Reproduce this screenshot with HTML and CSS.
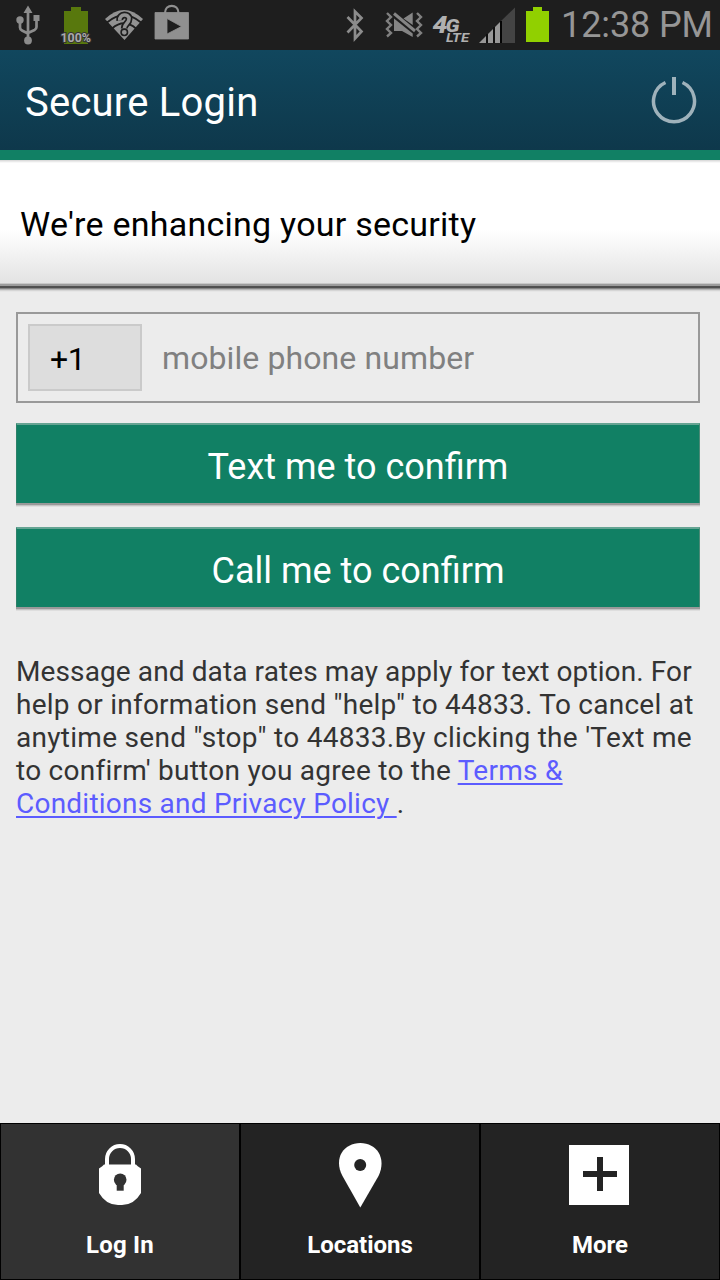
FILE: index.html
```html
<!DOCTYPE html>
<html lang="en">
<head>
<meta charset="utf-8">
<title>Secure Login</title>
<link rel="stylesheet" href="styles.css">
</head>
<body>
<div class="screen">
  <div class="status">
    <svg class="status-icons" width="550" height="50" viewBox="0 0 550 50">
      <g fill="#8c8c8c" stroke="#8c8c8c">
        <path d="M28 10V41M20 21V27.500Q20 29.500 22 30.500L28 33.500M36.500 19V27Q36.500 29 34.500 30L28 33" fill="none" stroke-width="2.700"/>
        <path d="M28 5.500l4.500 7.500h-9zM33.500 15h6v6h-6z" stroke="none"/>
        <circle cx="20" cy="20" r="3.700" stroke="none"/>
        <circle cx="28" cy="40.500" r="3.900" stroke="none"/>
      </g>
      <path d="M71 7h10v4h7v33H64V11h7z" fill="#58780d"/>
      <text class="charge" x="60.500" y="42" textLength="30.500" lengthAdjust="spacingAndGlyphs">100%</text>
      <path d="M105 19Q124 1 143 19L124.500 40z" fill="#929292"/>
      <path d="M107 22.500Q124 8 141 22.500M112 28.500Q124 18 136 28.500" fill="none" stroke="#1e1e1e" stroke-width="1.800"/>
      <path d="M119.800 20.500C119 13.500 129.500 13.500 129 19c0 4.500-4.700 4.500-4.700 9.500" fill="none" stroke="#1e1e1e" stroke-width="7"/>
      <path d="M119.800 20.500C119 13.500 129.500 13.500 129 19c0 4.500-4.700 4.500-4.700 9.500" fill="none" stroke="#929292" stroke-width="3.600"/>
      <circle cx="124.300" cy="32.300" r="3.200" fill="#929292" stroke="#1e1e1e" stroke-width="1.600"/>
      <path d="M155 12.500h33.500v26.500h-33.500zM167 18.500v15.500l14.500-7.500z" fill="#909090" fill-rule="evenodd" stroke="#909090" stroke-width=".8"/>
      <path d="M165 13C165 3.500 178.500 3.500 178.500 13" fill="none" stroke="#909090" stroke-width="2.200"/>
      <path d="M347.500 17L361.500 31.500 355 38.500V11.500L361.500 18 347.500 32.500" fill="none" stroke="#8c8c8c" stroke-width="2.700"/>
      <path d="M387 13l4 4-4 4 4 4-4 4 4 4-4 3.500M417 13l4 4-4 4 4 4-4 4 4 4-4 3.500" fill="none" stroke="#808080" stroke-width="2.400"/>
      <path d="M394 18.500L412.700 33.500V37L402 31H394zM403.500 18.500L412.700 12.500V25z" fill="#858585"/>
      <path d="M394 13.500L415 31" fill="none" stroke="#858585" stroke-width="3"/>
      <text class="net-four" x="432.500" y="32.500" textLength="15" lengthAdjust="spacingAndGlyphs">4</text>
      <text class="net-g" x="445.500" y="32" textLength="14" lengthAdjust="spacingAndGlyphs">G</text>
      <text class="net-lte" x="446" y="42" textLength="23" lengthAdjust="spacingAndGlyphs">LTE</text>
      <path d="M479 43L500 22V43z" fill="#989898"/>
      <path d="M487 34v9M494 27v16" stroke="#101010" stroke-width="2"/>
      <path d="M500 22L515 7.500V43H500z" fill="#444"/>
      <path d="M501 21v22" stroke="#050505" stroke-width="2"/>
      <path d="M533 7h9v4h7v31h-23V11h7z" fill="#91d000"/>
    </svg>
    <span class="clock">12:38 PM</span>
  </div>
  <header class="header">
    <h1 class="title">Secure Login</h1>
    <svg class="power" width="46" height="48" viewBox="0 0 46 48">
      <path d="M14.500 5.500A20.500 20.500 0 1 0 31.500 5.500" fill="none" stroke="#9fb2bb" stroke-width="3.500"/>
      <path d="M23 0v18" stroke="#9fb2bb" stroke-width="4"/>
    </svg>
  </header>
  <div class="banner"><span class="banner-text">We're enhancing your security</span></div>
  <div class="banner-edge"></div>
  <main class="main">
    <div class="phone">
      <span class="code">+1</span>
      <span class="hint">mobile phone number</span>
    </div>
    <button class="button">Text me to confirm</button>
    <button class="button">Call me to confirm</button>
    <p class="legal">
      <span class="line-a">Message and data rates may apply for text option. For</span><br>
      <span class="line-b">help or information send "help" to 44833. To cancel at</span><br>
      <span class="line-c">anytime send "stop" to 44833.By clicking the 'Text me</span><br>
      <span class="line-d">to confirm' button you agree to the <a class="link">Terms &amp;</a></span><br>
      <span class="line-e"><a class="link">Conditions and Privacy Policy&nbsp;</a>.</span>
    </p>
  </main>
  <nav class="tabs">
    <div class="tab active">
      <svg class="tab-icon" width="64" height="66" viewBox="0 0 64 66">
        <path d="M19 24V17A13 13 0 0 1 45 17V24" fill="none" stroke="#fff" stroke-width="4"/>
        <path d="M16 22.500H48Q49 24 53 26.500V51Q46 63 34 63H30Q18 63 11 51V26.500Q15 24 16 22.500z" fill="#fff"/>
        <circle cx="32.200" cy="37.700" r="6.300" fill="#323232"/>
        <path d="M28.700 40h7v8.700h-7z" fill="#323232"/>
      </svg>
      <span class="tab-label login-label">Log In</span>
    </div>
    <div class="tab">
      <svg class="tab-icon" width="64" height="66" viewBox="0 0 64 66">
        <path d="M32.300 65.500L14.500 34C5 16 16 1 32.300 1S59 16 50.500 34z" fill="#fff"/>
        <circle cx="32.200" cy="23" r="6" fill="#232323"/>
      </svg>
      <span class="tab-label">Locations</span>
    </div>
    <div class="tab">
      <svg class="tab-icon" width="64" height="66" viewBox="0 0 64 66">
        <path d="M1 3h60v60H1zM29 15v14H15v6h14v14h6V35h14v-6H35V15z" fill="#fff" fill-rule="evenodd"/>
      </svg>
      <span class="tab-label">More</span>
    </div>
  </nav>
</div>
</body>
</html>
```
FILE: styles.css
```css
* { box-sizing: border-box; }
body { margin: 0; font-family: Roboto, "Liberation Sans", sans-serif; }
.screen { width: 720px; height: 1280px; display: flex; flex-direction: column; background: #ececec; overflow: hidden; }
.status { height: 50px; display: flex; background: #1e1e1e; flex: none; }
.status-icons { flex: none; }
.charge { font: bold 12px Roboto, sans-serif; fill: #aaa; stroke: #333; stroke-width: 2px; paint-order: stroke; }
.net-four { font: italic 900 24px Roboto, sans-serif; fill: #b0b0b0; }
.net-g { font: italic 900 18px Roboto, sans-serif; fill: #b0b0b0; }
.net-lte { font: italic 700 13px Roboto, sans-serif; fill: #b0b0b0; }
.clock { padding-left: 11px; font-size: 36px; line-height: 50px; font-weight: 400; letter-spacing: -0.1px; color: #969696; white-space: nowrap; }
.header { height: 110px; flex: none; display: flex; justify-content: space-between; align-items: flex-start; padding: 27px 23px 0 25px; background: linear-gradient(#11475e, #0e384b) padding-box; border-bottom: 10px solid #118064; }
.title { margin: 0; font-size: 40px; font-weight: 400; line-height: 52px; letter-spacing: 0.22px; color: #fff; white-space: nowrap; }
.banner { height: 123px; flex: none; padding: 0 20px; line-height: 128px; font-size: 34px; letter-spacing: 0.24px; background: linear-gradient(#d5d5d5 0, #fff 3px, #fff 70px, #e3e3e3 123px); white-space: nowrap; }
.banner-edge { height: 9px; flex: none; background: linear-gradient(#c8c8c8 0 1px, #9c9c9c 1px 3px, #505050 3px 5px, #858585 5px 6px, #b5b5b5 6px 7px, #d5d5d5 7px 8px, #e6e6e6 8px); }
.main { flex: 1; padding: 20px 20px 0 16px; }
.phone { height: 91px; display: flex; border: 2px solid #999; padding: 10px; margin-bottom: 20px; font-size: 32px; white-space: nowrap; }
.code { width: 114px; height: 67px; border: 2px solid #cacaca; background: #ddd; padding-left: 20px; line-height: 66px; letter-spacing: -0.5px; }
.hint { padding-left: 20px; line-height: 68px; letter-spacing: 0.1px; color: #808080; }
.button { display: block; width: 684px; height: 80px; border: 0; border-top: 2px solid #66a493; border-right: 1px solid #4c8a77; border-left: 1px solid #2c8068; background: #118064; color: #fff; font: 36px Roboto, sans-serif; line-height: 84px; padding: 0; margin: 0 0 24px; box-shadow: 0 2px #999, 0 3px #c4c4c4, 0 4px #dedede; }
.legal { margin: 48px 0 0; font-size: 28px; line-height: 33px; color: #333; white-space: nowrap; }
.line-a { letter-spacing: 0.11px; }
.line-b { letter-spacing: 0.25px; }
.line-c { letter-spacing: 0.29px; }
.line-d { letter-spacing: 0.26px; }
.line-e { letter-spacing: 0.23px; }
.link { color: #5c5cff; text-decoration: underline; text-decoration-thickness: 2px; text-underline-offset: 3px; }
.tabs { height: 157px; flex: none; display: grid; grid-template-columns: repeat(3, 240px); }
.tab { display: flex; flex-direction: column; align-items: center; padding-top: 18px; border: 1px solid #000; background: #232323; color: #fff; }
.active { background: #323232; }
.tab-icon { flex: none; }
.tab-label { margin-top: 19px; font-size: 24px; line-height: 36px; font-weight: 700; }
.login-label { letter-spacing: 0.2px; }
```
